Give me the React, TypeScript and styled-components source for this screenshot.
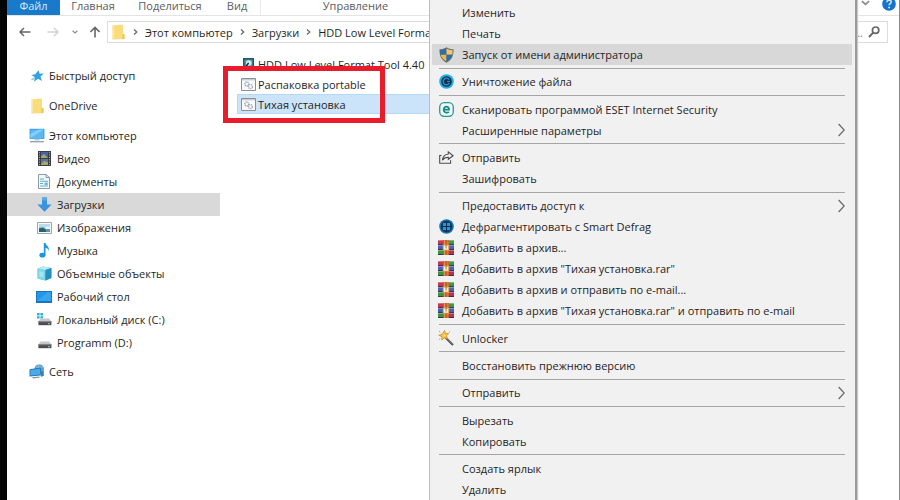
import React from "react";
import styled, { createGlobalStyle } from "styled-components";

const GlobalStyle = createGlobalStyle`
  *, *::before, *::after { box-sizing: border-box; }
  body {
    margin: 0;
    background: #ffffff;
    color: #1f1f1f;
    font-family: "Open Sans", "Noto Sans", sans-serif;
    font-size: 11px;
    overflow: hidden;
  }
  button, input { font: inherit; color: inherit; }
  ul { list-style: none; margin: 0; padding: 0; }
`;

/* ---------- window ---------- */

const Window = styled.div`
  position: relative;
  display: flex;
  flex-direction: column;
  height: 100vh;
  overflow: hidden;
  border-left: 7px solid #050505;
  border-right: 1px solid #8a8a8a;
`;

const PlainButton = styled.button`
  display: flex;
  align-items: center;
  border: 0;
  padding: 0;
  background: transparent;
  white-space: nowrap;
  text-align: left;
`;

const Ribbon = styled.nav`
  display: flex;
  flex: none;
  height: 16px;
  border-bottom: 1px solid #e3e4e6;
`;

const Tab = styled(PlainButton)<{ $active?: boolean; $width: number }>`
  justify-content: center;
  width: ${(p) => p.$width}px;
  height: 15px;
  padding-bottom: 4px;
  line-height: 11px;
  background: ${(p) => (p.$active ? "#1979ca" : "transparent")};
  color: ${(p) => (p.$active ? "#d8ecfb" : "#5c5c5c")};
`;

const ContextTab = styled(Tab)`
  border-left: 1px solid #ececec;
`;

const RibbonTools = styled.div`
  display: flex;
  align-items: flex-start;
  gap: 12px;
  margin-left: auto;
  padding-right: 3px;
`;

const HelpButton = styled(PlainButton)`
  margin-top: -3px;
`;

const AddressRow = styled.div`
  display: flex;
  flex: none;
  align-items: center;
  height: 38px;
  padding-right: 11px;
  padding-bottom: 6px;
`;

const NavButtons = styled.div`
  display: flex;
  align-items: center;
  width: 100px;
  padding-left: 12px;
`;

const NavButton = styled(PlainButton)<{ $gap: number }>`
  margin-right: ${(p) => p.$gap}px;
`;

const Field = styled.div`
  display: flex;
  align-items: center;
  height: 22px;
  border: 1px solid #dcdcdc;
  background: #ffffff;
`;

const AddressField = styled(Field)`
  flex: 1;
  padding-left: 4px;
`;

const SearchField = styled(Field)`
  width: 180px;
  margin-left: 8px;
  padding-right: 7px;
`;

const SearchInput = styled.input`
  flex: 1;
  min-width: 0;
  border: 0;
  padding: 0 5px 0 0;
  background: transparent;
  text-align: right;
  outline: none;
`;

const Crumbs = styled.ol`
  display: flex;
  align-items: center;
  margin: 0;
  padding: 0 0 0 8px;
  list-style: none;
`;

const Crumb = styled.li`
  display: flex;
  align-items: center;
  gap: 7px;
  margin-right: 7px;
`;

const Body = styled.div`
  display: flex;
  flex: 1;
  min-height: 0;
`;

/* ---------- navigation tree ---------- */

const Sidebar = styled.nav`
  flex: none;
  width: 213px;
  padding-top: 10px;
`;

const TreeRow = styled.li<{ $selected?: boolean; $gap?: number }>`
  margin-top: ${(p) => p.$gap ?? 0}px;
  background: ${(p) => (p.$selected ? "#d9d9d9" : "transparent")};
`;

const TreeButton = styled(PlainButton)<{ $nested?: boolean }>`
  gap: ${(p) => (p.$nested ? 5 : 4)}px;
  width: 100%;
  height: 23px;
  padding-left: ${(p) => (p.$nested ? 29 : 22)}px;
`;

const IconBox = styled.span`
  display: flex;
  flex: none;
  justify-content: center;
  width: 16px;
`;

/* ---------- file list ---------- */

const Files = styled.main`
  position: relative;
  flex: 1;
  min-width: 0;
  padding-left: 17px;
`;

const FileList = styled.ul`
  max-width: 480px;
`;

const FileRow = styled(PlainButton)<{ $selected?: boolean }>`
  gap: 2px;
  width: 100%;
  height: 20px;
  padding-left: 3px;
  background: ${(p) => (p.$selected ? "#cce4f9" : "transparent")};
  box-shadow: ${(p) => (p.$selected ? "inset 0 0 0 1px #b5d8f5" : "none")};
`;

const Highlight = styled.div`
  position: absolute;
  left: 3px;
  top: 12px;
  width: 162px;
  height: 57px;
  border: 5px solid #e81c2a;
  pointer-events: none;
`;

/* ---------- context menu ---------- */

const Menu = styled.div`
  position: absolute;
  left: 422px;
  top: 0;
  display: flex;
  flex-direction: column;
  width: 428px;
  min-height: 100%;
  padding: 2px 3px 0 2px;
  background: #f2f1f2;
  border-left: 1px solid #bdbdbd;
  border-right: 2px solid #9a9a9c;
  box-shadow: 1px 0 1px #c9c9c9;
`;

const MenuItem = styled(PlainButton)<{ $hot?: boolean }>`
  flex: none;
  width: 100%;
  height: 21px;
  padding-left: 6px;
  padding-right: 7px;
  background: ${(p) => (p.$hot ? "#d8d8d8" : "transparent")};
`;

const MenuIcon = styled.span`
  display: flex;
  flex: none;
  justify-content: center;
  width: 16px;
  margin-right: 8px;
`;

const MenuLabel = styled.span`
  flex: 1;
`;

const Separator = styled.div`
  display: flex;
  flex: 1 0 6px;
  align-items: center;
  margin: 0 7px;

  &::before {
    content: "";
    flex: 1;
    height: 1px;
    background: #a5a5a7;
  }
`;

/* ---------- icons ---------- */

const Chevron = () => (
  <svg width="7" height="14" viewBox="0 0 7 14" fill="none" stroke="#6c6c6c" strokeWidth="1.3" aria-hidden>
    <path d="M0.6 1 6.2 7 0.6 13" />
  </svg>
);

const CrumbArrow = () => (
  <svg width="5" height="8" viewBox="0 0 5 8" fill="none" stroke="#6a6a6a" strokeWidth="1.3" aria-hidden>
    <path d="M1 1.4 3.8 4 1 6.6" />
  </svg>
);

const BackArrow = ({ color, flip }: { color: string; flip?: boolean }) => (
  <svg width="12" height="10" viewBox="0 0 12 10" fill="none" stroke={color} strokeWidth="1.5" aria-hidden>
    <path d={flip ? "M0.5 5H11M7 1l4 4-4 4" : "M11.5 5H1M5 1 1 5l4 4"} />
  </svg>
);

const UpArrow = () => (
  <svg width="12" height="12" viewBox="0 0 12 12" fill="none" stroke="#666" strokeWidth="1.6" aria-hidden>
    <path d="M6 11.5V1.5M1.4 6 6 1.4 10.6 6" />
  </svg>
);

const DownChevron = ({ w = 6 }: { w?: number }) => (
  <svg width={w} height="6" viewBox="0 0 8 5" fill="none" stroke="#8a8a8a" strokeWidth="1.5" aria-hidden>
    <path d="M0.8 0.8 4 3.8 7.2 0.8" />
  </svg>
);

const HelpIcon = () => (
  <svg width="14" height="14" viewBox="0 0 14 14" aria-hidden>
    <circle cx="7" cy="7" r="6.8" fill="#1574c9" />
    <path d="M4.9 5.2c0-2.8 4.3-2.6 4.3-.2 0 1.6-2 1.6-2.1 3.3" fill="none" stroke="#cfe6fa" strokeWidth="1.5" />
    <circle cx="7.1" cy="10.6" r="1" fill="#cfe6fa" />
  </svg>
);

const SearchIcon = () => (
  <svg width="12" height="12" viewBox="0 0 12 12" fill="none" stroke="#666" aria-hidden>
    <circle cx="7.6" cy="4.2" r="3.2" strokeWidth="1.7" />
    <path d="M5.2 6.6 1 11" strokeWidth="2" />
  </svg>
);

const FolderIcon = () => (
  <svg width="13" height="16" viewBox="0 0 13 16" aria-hidden>
    <path d="M0.5 1.5 10 0.5l1 1V10l1.5.6V15l-12 .5z" fill="#f9dc7c" />
    <path d="M11 9.8 12.5 10.6V15l-2 .3V10z" fill="#e9c65a" />
    <path d="M0.5 1.5 2 1.3V15.4H.5z" fill="#fbe8a4" />
  </svg>
);

const StarIcon = () => (
  <svg width="13" height="12" viewBox="0 0 13 12" aria-hidden>
    <path d="M7.6.2 8.6 3.8l4.2-.2-3.3 2.8 1.4 4.6-3.9-2.3L3 11.8l1-4.5L.4 5l3.8-.7z" fill="#35a0e4" />
    <path d="M0 9.6 3.6 7l.6 1.4L.8 10.6z" fill="#8ccaf0" />
  </svg>
);

const PcIcon = () => (
  <svg width="16" height="15" viewBox="0 0 16 15" aria-hidden>
    <path d="M.6.8h14.8v10H.6z" fill="#2f97df" />
    <path d="M1.4 1.6h13.2v8.4H1.4z" fill="#5bb8f0" />
    <path d="M1.4 10V6L10 1.6h4.6z" fill="#86cff8" />
    <path d="M5.5 10.8h5v1.6h-5z" fill="#b9c4cc" />
    <path d="M1 13h14v1.4H1z" fill="#8fa9bb" />
  </svg>
);

const VideoIcon = () => (
  <svg width="13" height="15" viewBox="0 0 13 15" aria-hidden>
    <path d="M0 0h13v15H0z" fill="#3b3d44" />
    <path d="M3 1h7v6H3z" fill="#4465a8" />
    <path d="M3 8h7v6H3z" fill="#54759b" />
    <path d="M3 5.5 6 3l4 4H3zM3 13l3-3 4 1v3H3z" fill="#a9a468" />
    <path d="M1.5 1v13M11.5 1v13" stroke="#a5a8ac" strokeWidth="1" strokeDasharray="1.2 1.2" />
  </svg>
);

const DocIcon = () => (
  <svg width="12" height="15" viewBox="0 0 12 15" aria-hidden>
    <path d="M.5.5H8l3.5 3v11H.5z" fill="#f3f8fa" stroke="#8e9ba3" />
    <path d="M8 .5v3h3.5" fill="none" stroke="#8e9ba3" />
    <path d="M2 5h4M2 7.3h8M2 9.5h3M2 12h8" stroke="#5ab1c8" strokeWidth="1.1" />
    <path d="M6.5 8.5h3.3v2.6H6.5z" fill="#7bb4d4" />
  </svg>
);

const DownloadIcon = () => (
  <svg width="15" height="15" viewBox="0 0 15 15" aria-hidden>
    <path d="M5 .4h5V7.4h4.6L7.5 14.7.4 7.4H5z" fill="#3a93dd" />
    <path d="M5 .4h5v3H5z" fill="#5aaae8" />
  </svg>
);

const ImageIcon = () => (
  <svg width="15" height="12" viewBox="0 0 15 12" aria-hidden>
    <path d="M.5.5h14v11H.5z" fill="#f5f7f8" stroke="#9ea8ae" />
    <path d="M2 2h11v8H2z" fill="#b9dbee" />
    <path d="M2 6l4-1 3 2 4 0v3H2z" fill="#5b97b8" />
    <path d="M2 6.5l4-.6 3 2V10H2z" fill="#2c5f6e" />
    <path d="M8 5.6l3-1.2 2 .8V7H9z" fill="#eaf4f8" />
  </svg>
);

const MusicIcon = () => (
  <svg width="13" height="15" viewBox="0 0 13 15" aria-hidden>
    <ellipse cx="4.4" cy="12.2" rx="3" ry="2.4" fill="#1d95e0" />
    <path d="M5.8 0h1.7c.3 2.6 4.4 3.4 3.2 8.2-.2-2-1.5-3-3.2-3.4v7.4H5.8z" fill="#1d95e0" />
  </svg>
);

const CubeIcon = () => (
  <svg width="15" height="15" viewBox="0 0 15 15" aria-hidden>
    <path d="M.6 2.6 6 .5l8.4 1.6v10L8.5 14.6.6 12.5z" fill="#45b8d4" />
    <path d="M.6 2.6 8.4 4v10.6L.6 12.5z" fill="#7fd6e6" />
    <path d="M.6 2.6 6 .5l8.4 1.6L8.4 4z" fill="#b9edf3" />
    <path d="M8.4 4l6-1.9v10l-6 2.5z" fill="#2390bd" />
    <path d="M2.4 5.2l4 .8v5.4l-4-.9z" fill="#a6e4ee" />
  </svg>
);

const DesktopIcon = () => (
  <svg width="16" height="12" viewBox="0 0 16 12" aria-hidden>
    <path d="M0 0h16v12H0z" fill="#1975be" />
    <path d="M1 1h14v9H1z" fill="#2496e6" />
    <path d="M1 10 12 1h3v9z" fill="#37a5ee" />
  </svg>
);

const DiskIcon = ({ system }: { system?: boolean }) => (
  <svg width="15" height="13" viewBox="0 0 15 13" aria-hidden>
    {system && <path d="M0 0h2.6v2.4H0zM3.4 0H6v2.4H3.4zM0 3.2h2.6v2.4H0zM3.4 3.2H6v2.4H3.4z" fill="#2cb3dc" />}
    <path d="M3.6 5.4h8.6l2.2 3H1.4z" fill="#c6c7c9" />
    <path d="M1.4 8.2h13v4h-13z" fill="#4c4d50" />
    <path d="M1.4 8.2h13v1h-13z" fill="#8c8d90" />
    <path d="M11 10.2h2v1h-2z" fill="#9fd3a8" />
  </svg>
);

const NetworkIcon = () => (
  <svg width="16" height="15" viewBox="0 0 16 15" aria-hidden>
    <circle cx="10.2" cy="5.2" r="4.8" fill="#5f9fc4" />
    <path d="M10.5.5c-2 3-2 6 0 9M7 3h7" stroke="#93c3da" fill="none" />
    <path d="M.5 5.2 11.8 3.600v7.800L.5 12.400z" fill="#2578b8" />
    <path d="M1.4 6 11 4.700v5.900L1.4 11.400z" fill="#4cabe6" />
    <path d="M3 13.300l7.500-.8v1.300L4 14.600z" fill="#7b98ab" />
    <path d="M11.800 7.500l3-.4v5l-3 .6z" fill="#3384b9" />
  </svg>
);

const HddFileIcon = () => (
  <svg width="11" height="13" viewBox="0 0 11 13" aria-hidden>
    <path d="M0 0h11v13H0z" fill="#27525f" />
    <path d="M1.5 1.5h8v8h-8z" fill="#3f9cb5" />
    <circle cx="5.8" cy="5" r="2.8" fill="#d8e9ec" />
    <path d="M5.6 5 2 9.6" stroke="#132c35" strokeWidth="1.5" />
  </svg>
);

const BatchIcon = () => (
  <svg width="15" height="13" viewBox="0 0 15 13" aria-hidden>
    <path d="M.5.5h14v12H.5z" fill="#fafafa" stroke="#8b8f92" />
    <path d="M1 1h13v1.4H1z" fill="#c6ccd0" />
    <circle cx="5.8" cy="6" r="2" fill="none" stroke="#9aa9b4" strokeWidth="1.4" strokeDasharray="1.2 .6" />
    <circle cx="9.4" cy="8.6" r="2" fill="none" stroke="#9aa9b4" strokeWidth="1.4" strokeDasharray="1.2 .6" />
  </svg>
);

const ShieldIcon = () => (
  <svg width="15" height="16" viewBox="0 0 15 16" aria-hidden>
    <path d="M7.5.3C9.5 1.8 12 2.3 14.5 2.3 14.7 8.5 13 13 7.5 15.7 2 13 .3 8.5.5 2.3 3 2.3 5.5 1.8 7.5.3z" fill="#5b6a74" />
    <path d="M7.5 1.6V7.8H1.7C1.5 6.3 1.4 4.8 1.5 3.3 3.6 3.2 5.7 2.7 7.5 1.6z" fill="#2c6ea9" />
    <path d="M7.5 1.6c1.8 1.1 3.9 1.6 6 1.7.1 1.5 0 3-.2 4.500H7.5z" fill="#f3c765" />
    <path d="M1.7 7.8h5.8v6.600C4.300 12.900 2.400 10.700 1.700 7.800z" fill="#f0b84a" />
    <path d="M7.5 7.8h5.8c-.7 2.900-2.600 5.100-5.800 6.600z" fill="#2c6ea9" />
  </svg>
);

const ShredIcon = () => (
  <svg width="15" height="15" viewBox="0 0 15 15" aria-hidden>
    <circle cx="7.5" cy="7.5" r="7.3" fill="#1eaee6" />
    <circle cx="7.5" cy="7.5" r="5.3" fill="#0e2f4a" />
    <path d="M10.2 5.600A3.300 3.300 0 1 0 10.400 9.200" fill="none" stroke="#2c8cc2" strokeWidth="1.500" />
    <path d="M8 7.500h3" stroke="#2c8cc2" strokeWidth="1.300" />
  </svg>
);

const EsetIcon = () => (
  <svg width="15" height="15" viewBox="0 0 15 15" fill="none" aria-hidden>
    <rect x=".7" y=".7" width="13.6" height="13.6" rx="4.5" fill="#eef7f6" stroke="#2b9790" strokeWidth="1.3" />
    <path d="M4.9 7.6h5.2C10.2 3.6 4.7 3.5 4.7 7.5c0 3.6 3.6 3.7 5.2 2.3" stroke="#168c85" strokeWidth="1.7" />
  </svg>
);

const ShareIcon = () => (
  <svg width="15" height="13" viewBox="0 0 15 13" fill="none" stroke="#4c4c4c" strokeWidth="1.1" aria-hidden>
    <path d="M2.6 4.5H.7V12.2H11.6V9.2" />
    <path d="M9.3.9 14.1 4.7 9.3 8.3V6.2C6.6 6.1 4.9 7 3.5 9.2 3.9 5.7 5.9 3.4 9.3 3z" />
  </svg>
);

const DefragIcon = () => (
  <svg width="15" height="15" viewBox="0 0 15 15" aria-hidden>
    <circle cx="7.5" cy="7.5" r="7.3" fill="#1679b5" />
    <circle cx="7.5" cy="7.5" r="5.9" fill="#113c61" />
    <path d="M4 4h3v3H4zM8 4h3v3H8zM4 8h3v3H4zM8 8h3v3H8z" fill="#2898d4" />
    <path d="M2.8 7.5h9.4M7.5 2.8v9.4" stroke="#0b2a49" />
  </svg>
);

const RarIcon = () => (
  <svg width="16" height="15" viewBox="0 0 16 15" aria-hidden>
    <path d="M0 0h6v5H0z" fill="#c93a4e" />
    <path d="M10 0h6v5h-6z" fill="#3f9a4a" />
    <path d="M0 5h16v5H0z" fill="#4a62b8" />
    <path d="M0 10h6v5H0z" fill="#3b9440" />
    <path d="M10 10h6v5h-6z" fill="#b53350" />
    <path d="M0 0h5v1H0zM0 5h16v1H0zM0 10h16v1H0zM11 0h5v1h-5z" fill="#ffffff" fillOpacity=".3" />
    <path d="M0 4.4h16M0 9.4h16M0 14.5h16" stroke="#3a2340" strokeWidth=".8" />
    <path d="M5.300 0h5.400v15H5.300z" fill="#c9612c" />
    <path d="M6 0h1v15H6zM9.500 0h.8v15h-.8z" fill="#e8924a" />
    <path d="M4.800 4.600h6.400v5.800H4.800z" fill="#dcb264" />
    <path d="M6 5.800h4v3.800H6z" fill="#fff4d2" />
    <path d="M7.600 4.500h1v4h-1z" fill="#9b7442" />
  </svg>
);

const WandIcon = () => (
  <svg width="16" height="16" viewBox="0 0 16 16" aria-hidden>
    <path d="M7 7 15 15" stroke="#4d4745" strokeWidth="2.2" />
    <path d="M7.5 7 14.8 14.2" stroke="#a59d99" strokeWidth=".8" />
    <path d="M6.5.4 7.5 3.6 10.8 3.4 8.3 5.8 9.7 9 6.4 7.7 3.8 10.2 3.9 6.7.8 5.2 4.3 4.2z" fill="#f8c542" stroke="#c9822c" strokeWidth=".7" />
    <path d="M5.5 4.5 7 5.5 6 6.5z" fill="#fff2b5" />
    <path d="M1 1l1.3 1.2M1 9.5l1.3-.8M12 1.5l-1 .8" stroke="#e29a40" />
  </svg>
);

/* ---------- data ---------- */

type TreeEntry = { label: string; icon: React.ReactNode; nested?: boolean; selected?: boolean; gap?: number };

const tree: TreeEntry[] = [
  { label: "Быстрый доступ", icon: <StarIcon /> },
  { label: "OneDrive", icon: <FolderIcon />, gap: 7 },
  { label: "Этот компьютер", icon: <PcIcon />, gap: 7 },
  { label: "Видео", icon: <VideoIcon />, nested: true },
  { label: "Документы", icon: <DocIcon />, nested: true },
  { label: "Загрузки", icon: <DownloadIcon />, nested: true, selected: true },
  { label: "Изображения", icon: <ImageIcon />, nested: true },
  { label: "Музыка", icon: <MusicIcon />, nested: true },
  { label: "Объемные объекты", icon: <CubeIcon />, nested: true },
  { label: "Рабочий стол", icon: <DesktopIcon />, nested: true },
  { label: "Локальный диск (C:)", icon: <DiskIcon system />, nested: true },
  { label: "Programm (D:)", icon: <DiskIcon />, nested: true },
  { label: "Сеть", icon: <NetworkIcon />, gap: 6 },
];

const files = [
  { label: "HDD Low Level Format Tool 4.40", icon: <HddFileIcon /> },
  { label: "Распаковка portable", icon: <BatchIcon /> },
  { label: "Тихая установка", icon: <BatchIcon />, selected: true },
];

type MenuEntry = { label: string; icon?: React.ReactNode; submenu?: boolean; hot?: boolean };

const menuGroups: MenuEntry[][] = [
  [
    { label: "Изменить" },
    { label: "Печать" },
    { label: "Запуск от имени администратора", icon: <ShieldIcon />, hot: true },
  ],
  [{ label: "Уничтожение файла", icon: <ShredIcon /> }],
  [
    { label: "Сканировать программой ESET Internet Security", icon: <EsetIcon /> },
    { label: "Расширенные параметры", submenu: true },
  ],
  [{ label: "Отправить", icon: <ShareIcon /> }, { label: "Зашифровать" }],
  [
    { label: "Предоставить доступ к", submenu: true },
    { label: "Дефрагментировать с Smart Defrag", icon: <DefragIcon /> },
    { label: "Добавить в архив...", icon: <RarIcon /> },
    { label: 'Добавить в архив "Тихая установка.rar"', icon: <RarIcon /> },
    { label: "Добавить в архив и отправить по e-mail...", icon: <RarIcon /> },
    { label: 'Добавить в архив "Тихая установка.rar" и отправить по e-mail', icon: <RarIcon /> },
  ],
  [{ label: "Unlocker", icon: <WandIcon /> }],
  [{ label: "Восстановить прежнюю версию" }],
  [{ label: "Отправить", submenu: true }],
  [{ label: "Вырезать" }, { label: "Копировать" }],
  [{ label: "Создать ярлык" }, { label: "Удалить" }],
];

const crumbs = ["Этот компьютер", "Загрузки", "HDD Low Level Format"];

export default function App() {
  return (
    <>
      <GlobalStyle />
      <Window>
        <Ribbon aria-label="Лента">
          <Tab $width={53} $active>Файл</Tab>
          <Tab $width={66}>Главная</Tab>
          <Tab $width={88}>Поделиться</Tab>
          <Tab $width={46}>Вид</Tab>
          <ContextTab $width={190}>Управление</ContextTab>
          <RibbonTools>
            <NavButton $gap={0} aria-label="Свернуть ленту"><DownChevron w={9} /></NavButton>
            <HelpButton aria-label="Справка"><HelpIcon /></HelpButton>
          </RibbonTools>
        </Ribbon>

        <AddressRow>
          <NavButtons>
            <NavButton $gap={16} aria-label="Назад"><BackArrow color="#666" /></NavButton>
            <NavButton $gap={13} aria-label="Вперёд"><BackArrow color="#d2d2d2" flip /></NavButton>
            <NavButton $gap={11} aria-label="Последние расположения"><DownChevron /></NavButton>
            <NavButton $gap={0} aria-label="Вверх"><UpArrow /></NavButton>
          </NavButtons>
          <AddressField>
            <FolderIcon />
            <Crumbs>
              {crumbs.map((c) => (
                <Crumb key={c}>
                  <CrumbArrow />
                  <PlainButton>{c}</PlainButton>
                </Crumb>
              ))}
            </Crumbs>
          </AddressField>
          <SearchField>
            <SearchInput aria-label="Поиск" placeholder="..." />
            <SearchIcon />
          </SearchField>
        </AddressRow>

        <Body>
          <Sidebar aria-label="Область навигации">
            <ul>
              {tree.map((t) => (
                <TreeRow key={t.label} $selected={t.selected} $gap={t.gap}>
                  <TreeButton $nested={t.nested}>
                    <IconBox>{t.icon}</IconBox>
                    {t.label}
                  </TreeButton>
                </TreeRow>
              ))}
            </ul>
          </Sidebar>
          <Files>
            <FileList>
              {files.map((f) => (
                <li key={f.label}>
                  <FileRow $selected={f.selected}>
                    <IconBox>{f.icon}</IconBox>
                    {f.label}
                  </FileRow>
                </li>
              ))}
            </FileList>
            <Highlight />
          </Files>
        </Body>

        <Menu role="menu">
          {menuGroups.map((group, i) => (
            <React.Fragment key={i}>
              {i > 0 && <Separator role="separator" />}
              {group.map((m) => (
                <MenuItem key={m.label} role="menuitem" $hot={m.hot}>
                  <MenuIcon>{m.icon}</MenuIcon>
                  <MenuLabel>{m.label}</MenuLabel>
                  {m.submenu && <Chevron />}
                </MenuItem>
              ))}
            </React.Fragment>
          ))}
        </Menu>
      </Window>
    </>
  );
}
